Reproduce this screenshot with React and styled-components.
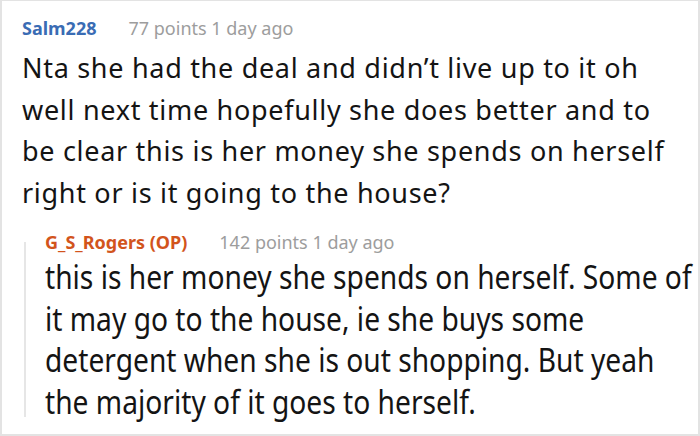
import React from 'react';
import styled, { createGlobalStyle } from 'styled-components';

const Global = createGlobalStyle`
  html, body {
    margin: 0;
    padding: 0;
    background: #fff;
  }
  body {
    font-family: "Noto Sans", "Open Sans", sans-serif;
  }
`;

const Frame = styled.div`
  box-sizing: border-box;
  width: 700px;
  height: 436px;
  border: 2px solid #e3e3e3;
  border-top-width: 1px;
  padding: 12px 10px 0 20px;
  overflow: hidden;
`;

const Header = styled.div`
  display: flex;
  align-items: baseline;
  gap: 32px;
  height: ${props => props.h}px;
  line-height: ${props => props.h}px;
  margin-bottom: ${props => props.mb || 0}px;
  white-space: nowrap;
`;

const Author = styled.span`
  font-size: 18px;
  font-weight: 700;
  color: ${props => props.color};
`;

const Meta = styled.span`
  font-size: 18px;
  color: #9d9d9d;
`;

const Body = styled.p`
  margin: 0;
  font-size: 27px;
  line-height: 41.7px;
  letter-spacing: 0.7px;
  color: #141414;
  width: 655px;
`;

const ReplyBody = styled.p`
  margin: 0;
  font-size: 33px;
  line-height: 41.7px;
  color: #141414;
  width: 760px;
  transform: scaleX(0.854);
  transform-origin: left top;
`;

const Reply = styled.div`
  display: flex;
  margin-top: 14px;
`;

const ThreadLine = styled.div`
  flex: none;
  width: 2px;
  margin: 14px 0 6px 2px;
  background: #e6e6e6;
`;

const ReplyContent = styled.div`
  padding-left: 19px;
  min-width: 0;
`;

export default function App() {
  return (
    <>
      <Global />
      <Frame>
        <Header h={30} mb={4}>
          <Author color="#3a6cb4">Salm228</Author>
          <Meta>77 points 1 day ago</Meta>
        </Header>
        <Body>
          Nta she had the deal and didn’t live up to it oh well next time hopefully she does better and to be clear this is her money she spends on herself right or is it going to the house?
        </Body>
        <Reply>
          <ThreadLine />
          <ReplyContent>
            <Header h={28}>
              <Author color="#d2541c">G_S_Rogers (OP)</Author>
              <Meta>142 points 1 day ago</Meta>
            </Header>
            <ReplyBody>
              this is her money she spends on herself. Some of it may go to the house, ie she buys some detergent when she is out shopping. But yeah the majority of it goes to herself.
            </ReplyBody>
          </ReplyContent>
        </Reply>
      </Frame>
    </>
  );
}
